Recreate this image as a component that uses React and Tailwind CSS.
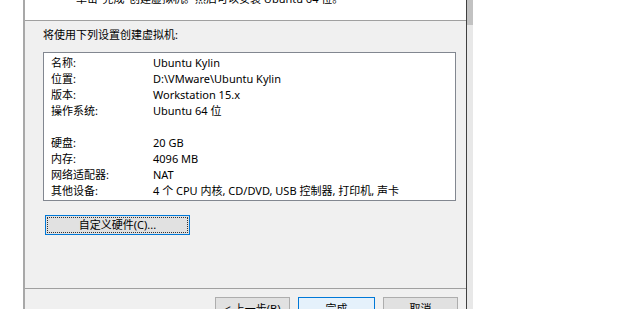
import React from "react"

const rows = [
  ["名称:", "Ubuntu Kylin"],
  ["位置:", "D:\\VMware\\Ubuntu Kylin"],
  ["版本:", "Workstation 15.x"],
  ["操作系统:", "Ubuntu 64 位"],
  ["", ""],
  ["硬盘:", "20 GB"],
  ["内存:", "4096 MB"],
  ["网络适配器:", "NAT"],
  ["其他设备:", "4 个 CPU 内核, CD/DVD, USB 控制器, 打印机, 声卡"],
]

const App = () => {
  return (
    <div className="w-[620px] h-[309px] bg-white overflow-hidden flex font-['Noto_Sans','Noto_Sans_CJK_SC',sans-serif] text-[11px] text-black">
      <div className="ml-[23px] w-[444px] h-full flex flex-col border-l-2 border-l-[#a8a8a8] border-r border-r-[#404040]">
        <div className="h-[21px] shrink-0 bg-white border-b border-[#a0a0a0] overflow-hidden pl-[51px]">
          <div className="-mt-[9px] leading-[16px]">单击"完成"创建虚拟机。然后可以安装 Ubuntu 64 位。</div>
        </div>

        <div className="h-[267px] shrink-0 bg-[#f0f0f0] flex flex-col">
          <div className="mt-[6px] pl-[18px] leading-[16px]">将使用下列设置创建虚拟机:</div>
          <div className="mt-[9px] ml-[18px] w-[413px] h-[149px] bg-white border border-[#828790] pt-[2px] pl-[7px]">
            {rows.map(([label, value], i) => (
              <div key={i} className="flex h-[16px] leading-[16px] whitespace-nowrap">
                <span className="w-[102px] shrink-0">{label}</span>
                <span>{value}</span>
              </div>
            ))}
          </div>
          <button className="mt-[14px] ml-[20px] w-[145px] h-[20px] bg-[#e1e1e1] border border-[#0078d7] p-[1px]">
            <span className="flex items-center justify-center w-full h-full border border-dotted border-[#333] leading-[14px]">
              自定义硬件(C)...
            </span>
          </button>
        </div>

        <div className="flex-1 bg-[#f0f0f0] border-t border-[#a0a0a0] flex justify-end items-start gap-[8px] pr-[8px] pt-[8px]">
          <button className="w-[75px] h-[23px] bg-[#e1e1e1] border border-[#adadad] leading-[21px]">&lt; 上一步(B)</button>
          <button className="w-[77px] h-[23px] bg-[#e5f1fb] border border-[#0078d7] leading-[21px]">完成</button>
          <button className="w-[75px] h-[23px] bg-[#e1e1e1] border border-[#adadad] leading-[21px]">取消</button>
        </div>
      </div>
      <div className="w-[6px] h-full bg-[#e8e8e8] flex flex-col">
        <div className="h-[25px] bg-[#c2c2c2]"></div>
      </div>
    </div>
  )
}

export default App
